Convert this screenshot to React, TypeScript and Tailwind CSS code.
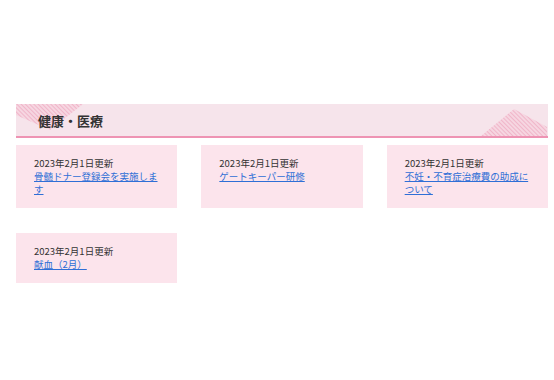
import React from "react";

const items = [
  { date: "2023年2月1日更新", title: "骨髄ドナー登録会を実施します" },
  { date: "2023年2月1日更新", title: "ゲートキーパー研修" },
  { date: "2023年2月1日更新", title: "不妊・不育症治療費の助成について" },
  { date: "2023年2月1日更新", title: "献血（2月）" },
];

function Hatch({ id }: { id: string }) {
  return (
    <defs>
      <pattern id={id} width="3" height="3" patternUnits="userSpaceOnUse" patternTransform="rotate(-45)">
        <rect width="3" height="3" fill="#f6d6e1" />
        <line x1="0" y1="0" x2="0" y2="3" stroke="#eeaac2" strokeWidth="1.5" />
      </pattern>
    </defs>
  );
}

export default function App() {
  return (
    <div
      className="w-[554px] h-[380px] bg-white pt-[104px] pl-4 pr-[6px]"
      style={{ fontFamily: '"Noto Sans CJK JP", "Noto Sans", sans-serif' }}
    >
      <div className="relative h-[34px] bg-[#f6e4eb] border-b-2 border-[#ee93b3] flex items-center">
        <svg className="absolute left-0 top-0" width="68" height="27" viewBox="0 0 68 27">
          <Hatch id="h1" />
          <polygon points="0,0 67,0 34,26 0,11" fill="url(#h1)" />
        </svg>
        <svg className="absolute right-0 bottom-0" width="67" height="27" viewBox="0 0 67 27">
          <Hatch id="h2" />
          <polygon points="0,27 33,0 66,18 66,27" fill="url(#h2)" />
        </svg>
        <h2 className="relative pl-[22px] text-[13px] font-bold text-[#333] leading-none">健康・医療</h2>
      </div>
      <div className="grid grid-cols-3 gap-x-6 gap-y-[25px] mt-[7px]">
        {items.map((it, i) => (
          <div key={i} className="bg-[#fce4ec] px-[18px] pt-[12px] pb-[12px] text-[9.5px] leading-[13px]">
            <div className="text-[#333]">{it.date}</div>
            <a href="#" className="text-[#2f6fd6] underline">
              {it.title}
            </a>
          </div>
        ))}
      </div>
    </div>
  );
}
